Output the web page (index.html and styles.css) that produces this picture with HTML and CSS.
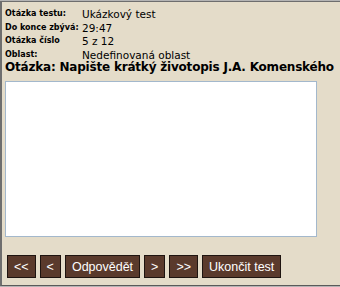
FILE: index.html
```html
<!DOCTYPE html>
<html lang="cs">
<head>
<meta charset="utf-8">
<link rel="stylesheet" href="styles.css">
</head>
<body>
<div class="frame">
  <div class="inner">
    <div class="info">
      <div class="lbl">Otázka testu:</div><div class="val">Ukázkový test</div>
      <div class="lbl">Do konce zbývá:</div><div class="val">29:47</div>
      <div class="lbl">Otázka číslo</div><div class="val">5 z 12</div>
      <div class="lbl">Oblast:</div><div class="val">Nedefinovaná oblast</div>
    </div>
    <h1 class="question">Otázka: Napište krátký životopis J.A. Komenského</h1>
    <textarea class="answer"></textarea>
    <div class="buttons">
      <button class="btn">&lt;&lt;</button>
      <button class="btn">&lt;</button>
      <button class="btn">Odpovědět</button>
      <button class="btn">&gt;</button>
      <button class="btn">&gt;&gt;</button>
      <button class="btn">Ukončit test</button>
    </div>
  </div>
</div>
</body>
</html>
```
FILE: styles.css
```css
html, body {
  margin: 0;
  padding: 0;
  background: #e4dcc9;
}
.frame {
  width: 340px;
  height: 287px;
  box-sizing: border-box;
  border-top: 1px solid #b4b4b4;
  border-bottom: 1px solid #b4b4b4;
}
.inner {
  height: 100%;
  box-sizing: border-box;
  border-top: 1px solid #6e6e6e;
  border-left: 2px solid #6e6e6e;
  border-bottom: 1px solid #5a5a5a;
  padding: 5px 0 0 3px;
  font-family: "DejaVu Sans", Verdana, sans-serif;
  color: #000;
}
.info {
  display: grid;
  grid-template-columns: 77px auto;
  grid-auto-rows: 13.5px;
  align-items: center;
}
.lbl {
  font-size: 8px;
  font-weight: bold;
  white-space: nowrap;
}
.val {
  font-size: 10.5px;
  padding-top: 1px;
}
.question {
  margin: -1px 0 0 0;
  font-size: 12px;
  font-weight: bold;
  white-space: nowrap;
  letter-spacing: -0.2px;
}
.answer {
  display: block;
  margin: 7px 0 0 0;
  width: 312px;
  height: 156px;
  box-sizing: border-box;
  border: 1px solid #a3b8cc;
  background: #fff;
  resize: none;
}
.buttons {
  display: flex;
  gap: 4px;
  margin: 18px 0 0 2px;
}
.btn {
  height: 23px;
  box-sizing: border-box;
  padding: 0 6px;
  background: #5a3a2c;
  border: 1px solid #1e1410;
  color: #fff;
  font-family: "Liberation Sans", Arial, sans-serif;
  font-size: 12.5px;
  border-radius: 0;
}
```
